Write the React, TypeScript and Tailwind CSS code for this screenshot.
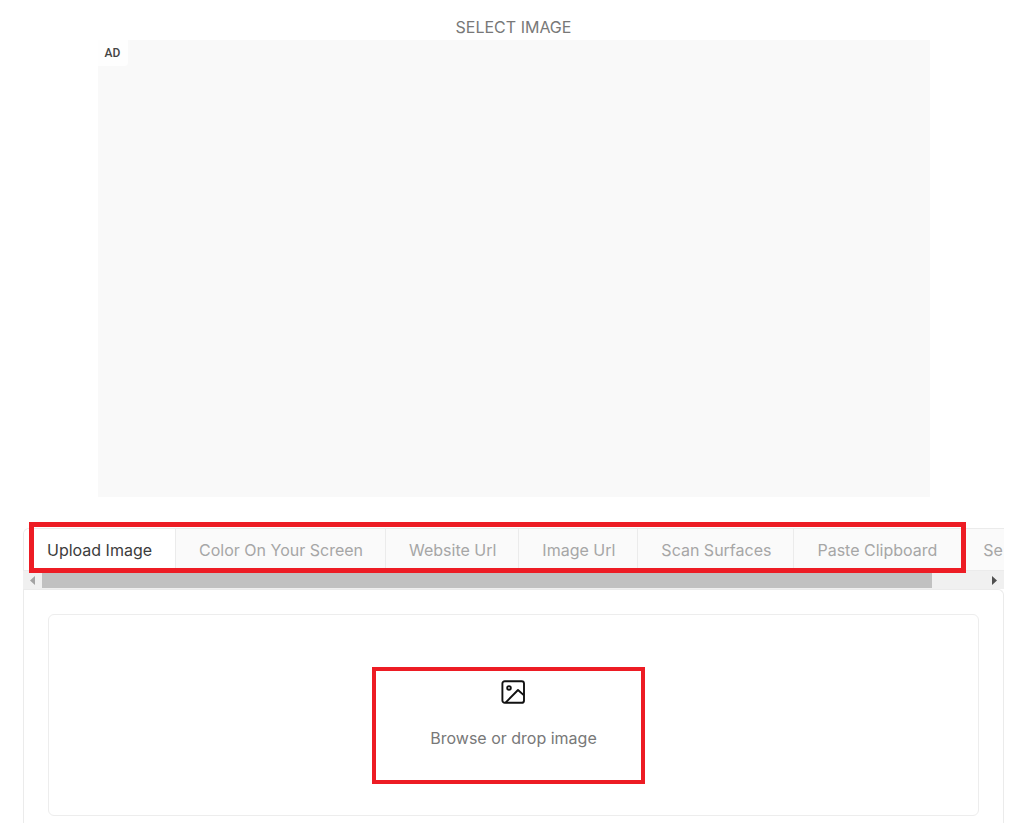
const tabs = [
  "Upload Image",
  "Color On Your Screen",
  "Website Url",
  "Image Url",
  "Scan Surfaces",
  "Paste Clipboard",
  "Se",
];

const ImageIcon = () => (
  <svg viewBox="0 0 24 24" className="h-6 w-6" fill="none" stroke="#111111" strokeWidth="1.9" strokeLinejoin="round" aria-hidden="true">
    <rect x="1.4" y="1.2" width="21.6" height="21.6" rx="2.4" />
    <circle cx="8" cy="7.9" r="1.8" />
    <path d="M4.6 22.6L17 10L23 15.4" />
  </svg>
);

const AdSlot = () => (
  <div className="mx-auto h-[457px] w-[85%] max-w-[832px] bg-[#f9f9f9]">
    <span className="flex h-[26px] w-[30px] items-center justify-center rounded-br bg-[#fefefe] font-[Roboto,sans-serif] text-xs font-medium text-[#444444]">
      AD
    </span>
  </div>
);

const TabList = () => (
  <div role="tablist" className="flex h-[43px] overflow-hidden rounded-tl-md border-y border-l border-[#ebebeb] bg-[#fafafa]">
    {tabs.map((tab, i) => (
      <button
        key={tab}
        type="button"
        role="tab"
        aria-selected={i === 0}
        className={
          i === 0
            ? "shrink-0 border-r border-[#ebebeb] bg-white px-[23px] pt-px text-[#3c3c3c]"
            : "shrink-0 border-r border-[#ebebeb] pt-px pr-[22px] pl-[23px] text-[#a6a6a6] nth-last-[-n+2]:border-r-[#fafafa]"
        }
      >
        {tab}
      </button>
    ))}
  </div>
);

const ScrollBar = () => (
  <div className="flex h-[18px] bg-[#f0f0f0]">
    <button type="button" aria-label="Scroll left" className="flex w-[19px] items-center justify-center">
      <svg viewBox="0 0 5 9" className="h-[9px] w-[5px]" fill="#a3a3a3">
        <path d="M5 0v9L0 4.5z" />
      </svg>
    </button>
    <div className="flex-1">
      <div className="mr-[53px] h-[17px] bg-[#c1c1c1]" />
    </div>
    <button type="button" aria-label="Scroll right" className="flex w-[19px] items-center justify-center">
      <svg viewBox="0 0 5 9" className="h-[9px] w-[5px]" fill="#505050">
        <path d="M0 0v9l5-4.5z" />
      </svg>
    </button>
  </div>
);

const DropZone = () => (
  <button type="button" className="flex h-[202px] w-full flex-col items-center justify-center rounded-md border border-[#ededed] text-[#787878]">
    <span className="relative flex flex-col items-center gap-[22px]">
      <ImageIcon />
      <span>Browse or drop image</span>
      <span className="pointer-events-none absolute -top-[13px] -right-[48px] -bottom-[34px] -left-[58px] border-4 border-[#ed1c24]" />
    </span>
  </button>
);

const App = () => {
  return (
    <main className="bg-white pt-[15px] pr-5 pl-[23px] font-[Inter,sans-serif] text-base">
      <h1 className="pb-px text-center text-[#787878]">SELECT IMAGE</h1>
      <AdSlot />

      <section className="mt-[31px]">
        <div className="relative">
          <TabList />
          <ScrollBar />
          <div className="pointer-events-none absolute -top-[6px] right-[38px] left-[6px] h-[51px] border-[5px] border-[#ed1c24]" />
        </div>
        <div className="rounded-tr-md border border-b-0 border-[#ebebeb] px-6 pt-6 pb-2">
          <DropZone />
        </div>
      </section>
    </main>
  );
};

export default App;
